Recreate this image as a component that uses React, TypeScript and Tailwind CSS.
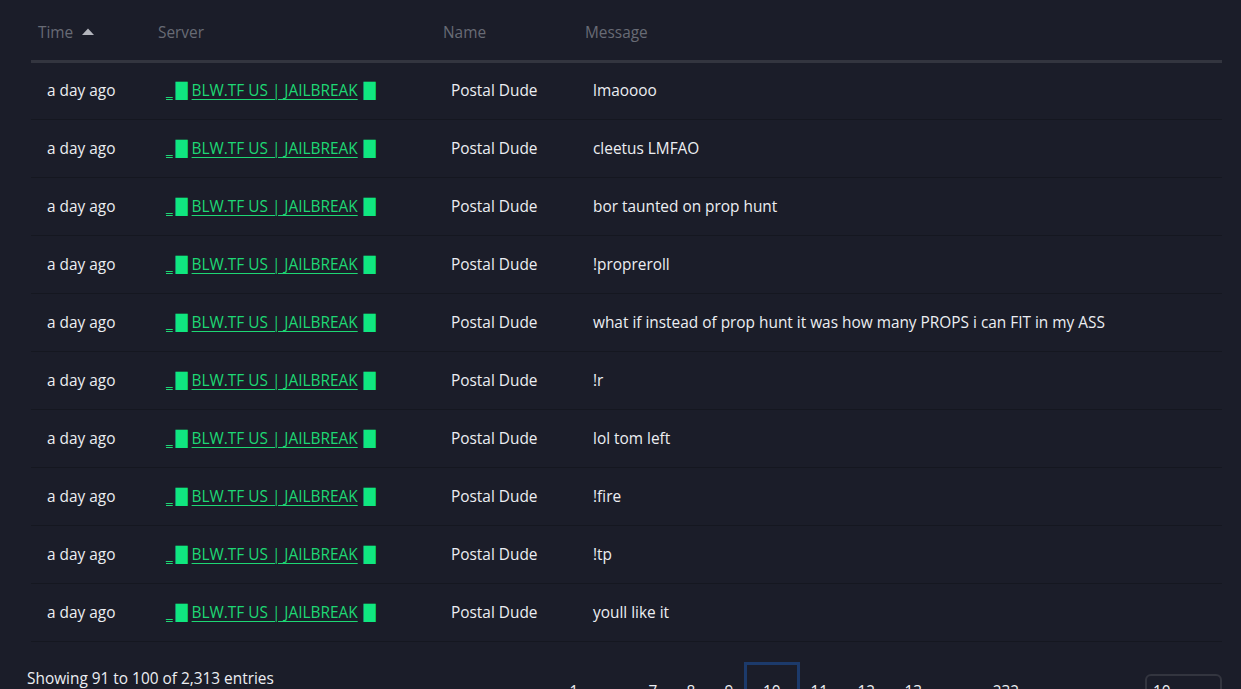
import React from "react";

const messages = [
    "lmaoooo",
    "cleetus LMFAO",
    "bor taunted on prop hunt",
    "!propreroll",
    "what if instead of prop hunt it was how many PROPS i can FIT in my ASS",
    "!r",
    "lol tom left",
    "!fire",
    "!tp",
    "youll like it",
];

const pages = [
    {label: "1", w: "w-[38px]"},
    {label: "…", w: "w-[41px]"},
    {label: "7", w: "w-[38px]"},
    {label: "8", w: "w-[38px]"},
    {label: "9", w: "w-[38px]"},
    {label: "10", w: "w-[48px]", active: true},
    {label: "11", w: "w-[47px]"},
    {label: "12", w: "w-[47px]"},
    {label: "13", w: "w-[47px]"},
    {label: "…", w: "w-[41px]"},
    {label: "232", w: "w-[56px]"},
];

function ServerLink() {
    return (
        <a href="#" className="text-[#1ed774] whitespace-nowrap">
            <span className="underline underline-offset-[3px] decoration-1">_</span>
            <span className="text-[#10e680] font-['DejaVu_Sans'] ml-[3px]">█</span>
            <span className="underline underline-offset-[3px] decoration-1 ml-[4px] mr-[6px]">BLW.TF US | JAILBREAK</span>
            <span className="text-[#10e680] font-['DejaVu_Sans']">█</span>
        </a>
    );
}

export default function App() {
    return (
        <div className="min-h-[689px] bg-[#1b1d29] font-['Open_Sans',sans-serif] text-[15.4px] leading-6 overflow-hidden">
            <div className="w-[1195px] ml-[27px]">
                <table className="ml-[4px] w-[1191px] border-collapse table-fixed">
                    <colgroup>
                        <col className="w-[119px]"/>
                        <col className="w-[285px]"/>
                        <col className="w-[142px]"/>
                        <col/>
                    </colgroup>
                    <thead>
                    <tr className="border-b-[3px] border-[#33353f] text-[#686b75] text-left">
                        <th className="font-normal pl-[7px] pt-[21px] pb-[15px]">
                            <span className="inline-flex items-center">
                                Time
                                <svg width="12" height="7" viewBox="0 0 12 7" className="ml-[9px] mb-[3px]">
                                    <path d="M0 7 L6 0.5 L12 7 Z" fill="#b3b5bc"/>
                                </svg>
                            </span>
                        </th>
                        <th className="font-normal pl-[8px] pt-[21px] pb-[15px]">Server</th>
                        <th className="font-normal pl-[8px] pt-[21px] pb-[15px]">Name</th>
                        <th className="font-normal pl-[8px] pt-[21px] pb-[15px]">Message</th>
                    </tr>
                    </thead>
                    <tbody>
                    {messages.map((msg, i) => (
                        <tr key={i} className="border-b border-[#151720] text-[#eceef2]">
                            <td className="pl-[16px] h-[58px] align-middle">a day ago</td>
                            <td className="pl-[16px] h-[58px] align-middle"><ServerLink/></td>
                            <td className="pl-[16px] h-[58px] align-middle">Postal Dude</td>
                            <td className="pl-[16px] h-[58px] align-middle whitespace-nowrap">{msg}</td>
                        </tr>
                    ))}
                    </tbody>
                </table>

                <div className="flex items-start mt-[25px]">
                    <div className="text-[#eceef2] whitespace-nowrap">Showing 91 to 100 of 2,313 entries</div>
                    <div className="flex ml-[281px] -mt-[1px] text-[#eceef2]">
                        {pages.map((p, i) => (
                            <span
                                key={i}
                                className={`${p.w} py-[14px] text-center ${p.active ? "outline-[3px] outline-solid outline-[#1c3a6b] outline-offset-[1px]" : ""}`}
                            >
                                {p.label}
                            </span>
                        ))}
                    </div>
                    <div className="ml-auto mt-[7px] w-[77px] h-[40px] rounded-md border-2 border-[#33353f] pl-[6px] pt-[4px] text-[#eceef2]">
                        10
                    </div>
                </div>
            </div>
        </div>
    );
}
